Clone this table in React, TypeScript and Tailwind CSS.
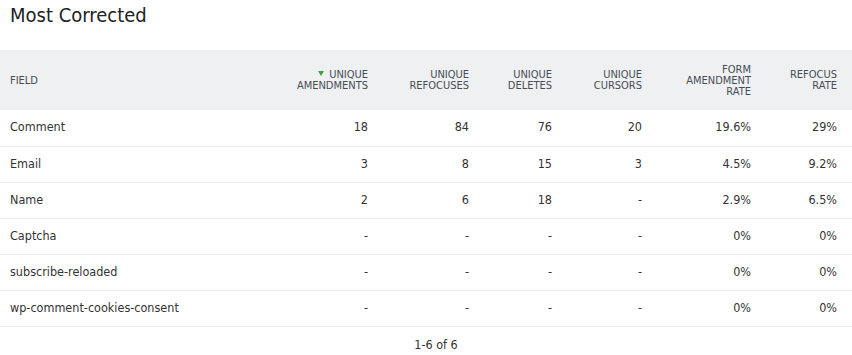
import React from "react";

const rows = [
  ["Comment", "18", "84", "76", "20", "19.6%", "29%"],
  ["Email", "3", "8", "15", "3", "4.5%", "9.2%"],
  ["Name", "2", "6", "18", "-", "2.9%", "6.5%"],
  ["Captcha", "-", "-", "-", "-", "0%", "0%"],
  ["subscribe-reloaded", "-", "-", "-", "-", "0%", "0%"],
  ["wp-comment-cookies-consent", "-", "-", "-", "-", "0%", "0%"],
];

export default function App() {
  return (
    <div className="w-[852px] h-[355px] bg-white text-[#333] overflow-hidden" style={{ fontFamily: '"DejaVu Sans Condensed", "DejaVu Sans", sans-serif' }}>
      <div className="h-[50px] pl-[10px] pt-[1px] text-[20px] leading-[28px] text-[#222]">Most Corrected</div>
      <table className="table-fixed w-[852px] border-collapse">
        <colgroup>
          <col className="w-[282px]" />
          <col className="w-[101px]" />
          <col className="w-[101px]" />
          <col className="w-[83px]" />
          <col className="w-[90px]" />
          <col className="w-[109px]" />
          <col className="w-[86px]" />
        </colgroup>
        <thead>
          <tr className="bg-[#eef0f2] h-[60px] text-[11px] leading-[11px] text-[#474d55] font-normal">
            <th className="text-left pl-[10px] font-normal align-middle">FIELD</th>
            <th className="text-right pr-[15px] font-normal align-middle">
              <span className="inline-block w-0 h-0 border-l-[3.5px] border-r-[3.5px] border-t-[5px] border-l-transparent border-r-transparent border-t-[#43a047] mr-[5px] mb-[2px]" />
              UNIQUE<br />AMENDMENTS
            </th>
            <th className="text-right pr-[15px] font-normal align-middle">UNIQUE<br />REFOCUSES</th>
            <th className="text-right pr-[15px] font-normal align-middle">UNIQUE<br />DELETES</th>
            <th className="text-right pr-[15px] font-normal align-middle">UNIQUE<br />CURSORS</th>
            <th className="text-right pr-[15px] font-normal align-middle">FORM<br />AMENDMENT<br />RATE</th>
            <th className="text-right pr-[15px] font-normal align-middle">REFOCUS<br />RATE</th>
          </tr>
        </thead>
        <tbody>
          {rows.map((r) => (
            <tr key={r[0]} className="h-[36px] border-b border-[#ececec] text-[12.5px]">
              {r.map((c, i) => (
                <td key={i} className={i === 0 ? "pl-[10px] text-left" : "pr-[15px] text-right"}>{c}</td>
              ))}
            </tr>
          ))}
        </tbody>
      </table>
      <div className="flex justify-center pl-[20px] pt-[9px] text-[12.5px] leading-[18px]">1-6 of 6</div>
    </div>
  );
}
